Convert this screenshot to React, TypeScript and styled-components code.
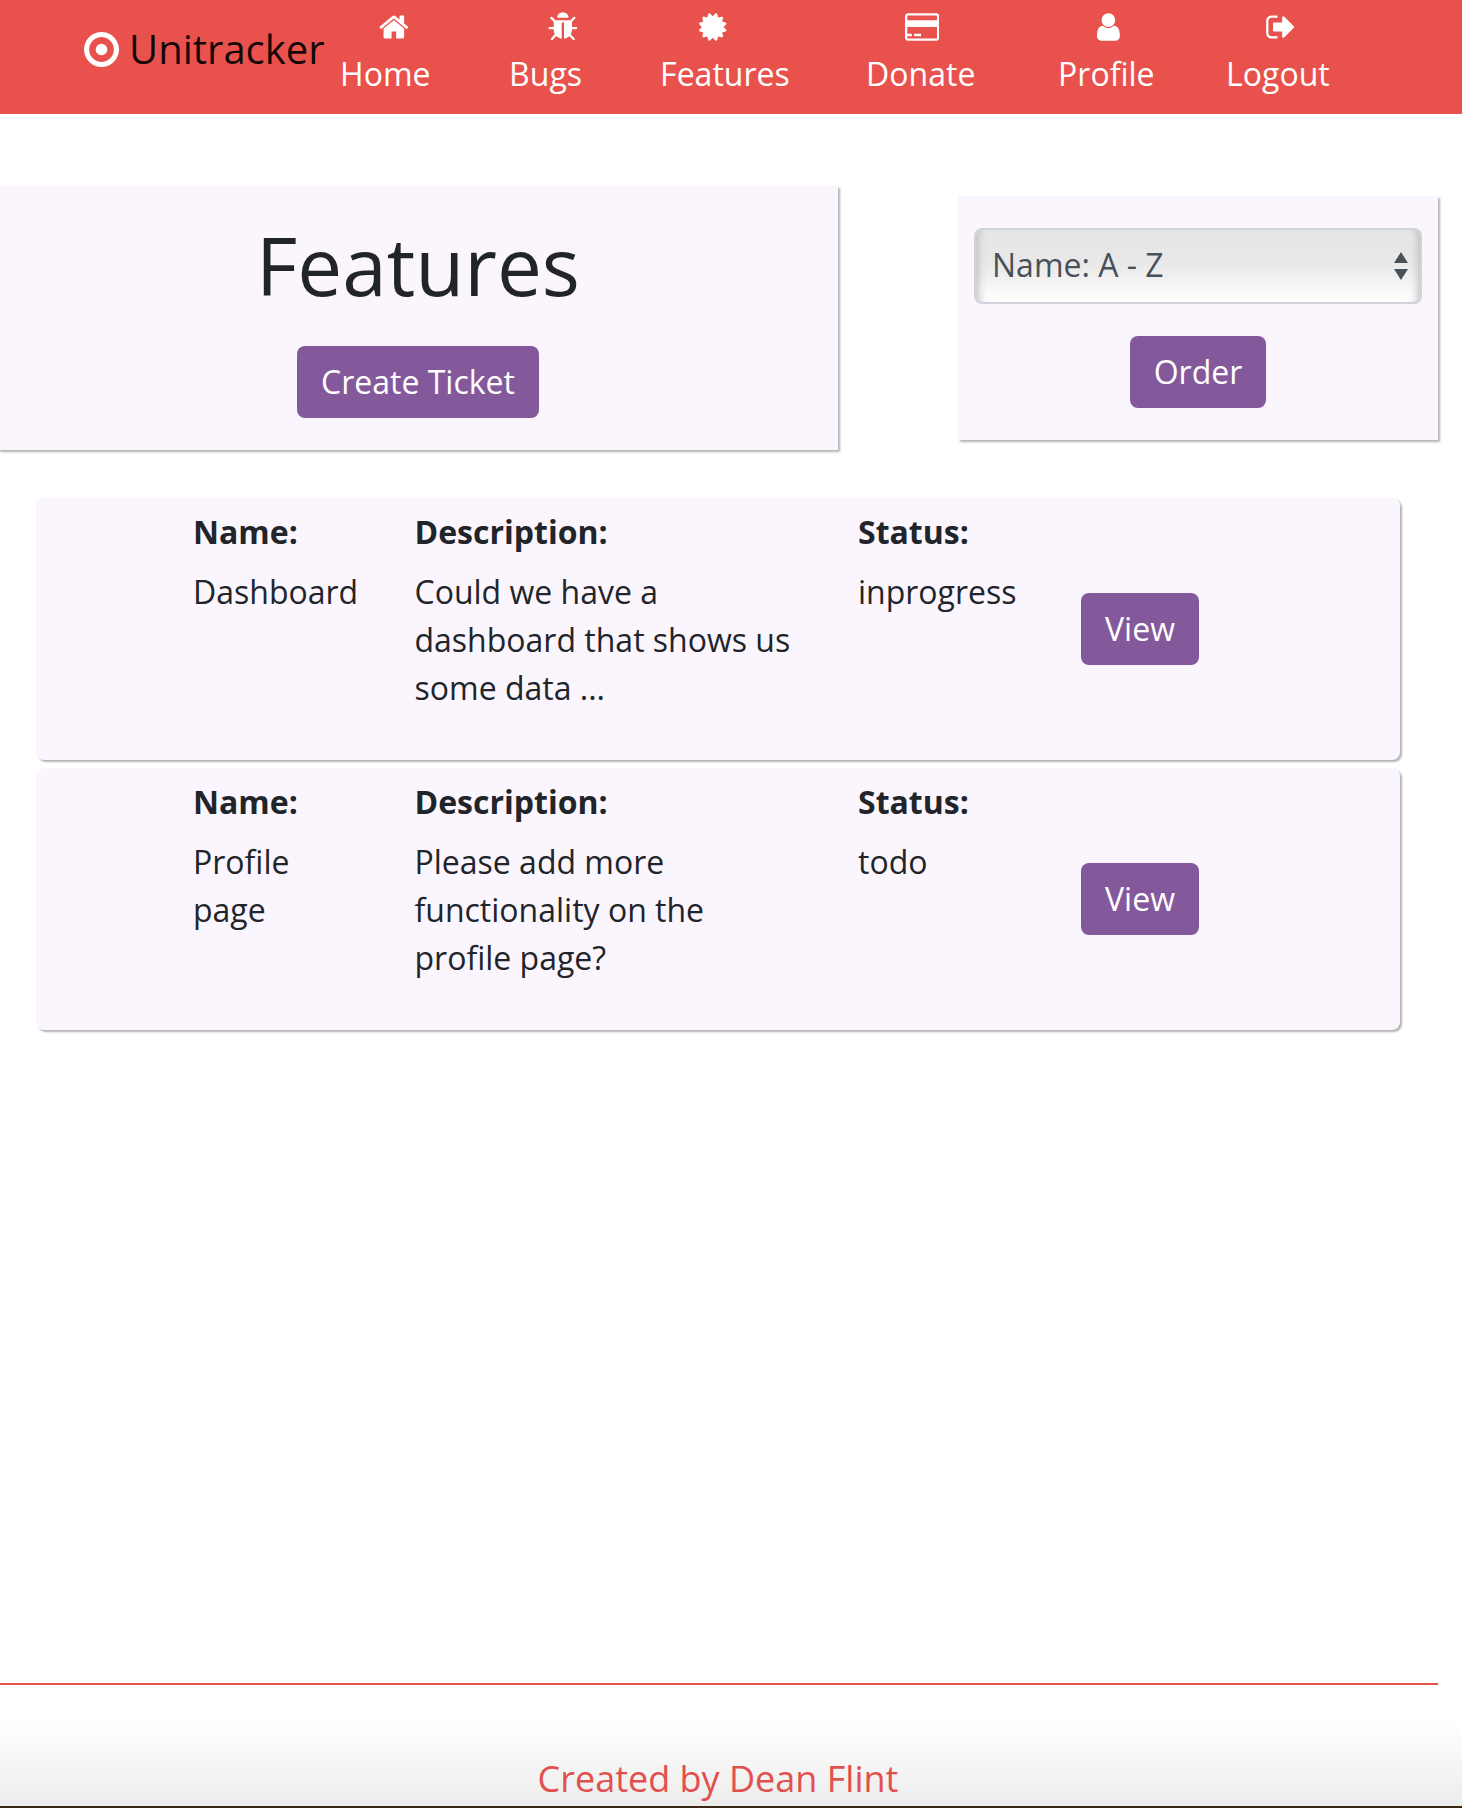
import * as React from 'react';
import styled, { createGlobalStyle } from 'styled-components';

const GlobalStyle = createGlobalStyle`
  html, body {
    margin: 0;
    padding: 0;
    background: #fff;
  }
  body {
    font-family: "Open Sans", "Liberation Sans", sans-serif;
    font-size: 32px;
    line-height: 48px;
    color: #212529;
  }
`;

const Page = styled.div`
  display: flex;
  flex-direction: column;
  height: 1808px;
  overflow: hidden;
`;

const Nav = styled.nav`
  display: flex;
  align-items: flex-start;
  height: 114px;
  flex-shrink: 0;
  background: #e9524c;
`;

const Brand = styled.a`
  display: flex;
  align-items: center;
  gap: 10px;
  margin: 19px 15.5px 0 84px;
  font-size: 40px;
  line-height: 60px;
  color: rgba(0, 0, 0, 0.92);
`;

const NavItem = styled.a<{ $width: number }>`
  display: block;
  width: ${(p) => p.$width}px;
  padding-top: 11px;
  color: #fff;
  svg {
    display: block;
    height: 32px;
    margin: 0 0 7px 39px;
    fill: #fff;
  }
`;

const Panels = styled.section`
  display: flex;
  align-items: flex-start;
  margin-top: 72px;
`;

const Panel = styled.div`
  background: #fbf6fe;
  box-shadow: 2px 2px 2px #b5b3b5;
  text-align: center;
`;

const TitlePanel = styled(Panel)`
  width: 840px;
  height: 264px;
  margin-left: -2px;
  padding-top: 31px;
  box-sizing: border-box;
`;

const SortPanel = styled(Panel)`
  width: 480px;
  height: 244px;
  margin: 10px 0 0 120px;
  padding: 32px 16px 0;
  box-sizing: border-box;
`;

const Title = styled.h1`
  margin: 0 0 33px;
  font-size: 80px;
  line-height: 96px;
  font-weight: 400;
`;

const Button = styled.a`
  display: inline-block;
  padding: 12px 24px;
  border-radius: 8px;
  background: #84599c;
  color: #fff;
`;

const SelectWrap = styled.div`
  position: relative;
  margin-bottom: 32px;
  svg {
    position: absolute;
    top: 24px;
    right: 14px;
    fill: #495057;
  }
`;

const Select = styled.select`
  display: block;
  width: 100%;
  height: 76px;
  padding: 0 16px 2px;
  border: 2px solid #ced4da;
  border-radius: 8px;
  appearance: none;
  background: linear-gradient(#e6e6e6 0%, #e8e8e8 45%, #fff 100%);
  box-shadow: inset 10px 0 8px -8px #bdbdbd, inset -10px 0 8px -8px #bdbdbd;
  font: inherit;
  color: #495057;
`;

const TicketList = styled.section`
  display: flex;
  flex-direction: column;
  gap: 8px;
  width: 1364px;
  margin: 48px 0 0 36px;
`;

const Ticket = styled.article`
  display: grid;
  grid-template-columns: 221.5px 443.5px 223px auto;
  height: 262px;
  padding: 10px 0 0 157px;
  box-sizing: border-box;
  border-radius: 8px;
  background: #fbf6fe;
  box-shadow: 2px 2px 2px #b5b3b5;
`;

const Field = styled.div`
  padding-right: 54px;
`;

const Label = styled.div`
  margin-bottom: 12px;
  font-weight: 700;
`;

const ViewCell = styled.div`
  padding-top: 85px;
`;

const Footer = styled.footer`
  margin-top: auto;
`;

const Rule = styled.hr`
  width: 1438px;
  height: 2px;
  margin: 0;
  border: 0;
  background: #e9524c;
`;

const Credit = styled.div`
  height: 121px;
  border-bottom: 2px solid #3a2714;
  background: linear-gradient(#fff 30%, #ececec 100%);
  font-size: 36px;
  line-height: 54px;
  color: #e2504d;
  text-align: center;
`;

const CreditText = styled.div`
  width: 1436px;
  padding-top: 67px;
`;

const icons = [
  { label: 'Home', width: 169, box: '64 0 1664 1792', d: 'M1472 992v480q0 26-19 45t-45 19h-384v-384h-256v384h-384q-26 0-45-19t-19-45v-480q0-1 .5-3t.5-3l575-474 575 474q1 2 1 6zm223-69l-62 74q-8 9-21 11h-3q-13 0-21-7l-692-577-692 577q-12 8-24 7-13-2-21-11l-62-74q-8-10-7-23.5t11-22.5l719-599q32-26 76-26t76 26l244 204v-195q0-14 9-23t23-9h192q14 0 23 9t9 23v408l219 182q10 8 11 21.5t-7 23.5z' },
  { label: 'Bugs', width: 151, box: '64 0 1664 1792', d: 'M1696 960q0 26-19 45t-45 19h-224q0 171-67 290l208 209q19 19 19 45t-19 45q-18 19-45 19t-45-19l-198-197q-5 5-15 13t-42 28.5-65 36.5-82 29-97 13v-896h-128v896q-51 0-101.5-13.5t-87-33-66-39-43.5-32.5l-15-14-183 207q-20 21-48 21-24 0-43-16-19-18-20.5-44.5t15.5-46.5l202-227q-58-114-58-274h-224q-26 0-45-19t-19-45 19-45 45-19h224v-294l-173-173q-19-19-19-45t19-45 45-19 45 19l173 173h844l173-173q19-19 45-19t45 19 19 45-19 45l-173 173v294h224q26 0 45 19t19 45zm-480-576h-640q0-133 93.5-226.5t226.5-93.5 226.5 93.5 93.5 226.5z' },
  { label: 'Features', width: 206, box: '128 0 1536 1792', d: 'M1504 896l138 135q30 28 20 70-12 41-52 51l-188 48 53 186q12 41-19 70-29 31-70 19l-186-53-48 188q-10 40-51 52-12 2-19 2-31 0-51-22l-135-138-135 138q-28 30-70 20-41-11-51-52l-48-188-186 53q-41 12-70-19-31-29-19-70l53-186-188-48q-40-10-52-51-10-42 20-70l138-135-138-135q-30-28-20-70 12-41 52-51l188-48-53-186q-12-41 19-70 29-31 70-19l186 53 48-188q10-41 51-51 41-12 70 19l135 139 135-139q29-30 70-19 41 10 51 51l48 188 186-53q41-12 70 19 31 29 19 70l-53 186 188 48q40 10 52 51 10 42-20 70z' },
  { label: 'Donate', width: 192, box: '0 0 1920 1792', d: 'M1760 128q66 0 113 47t47 113v1216q0 66-47 113t-113 47h-1600q-66 0-113-47t-47-113v-1216q0-66 47-113t113-47h1600zm-1600 128q-13 0-22.5 9.5t-9.5 22.5v224h1664v-224q0-13-9.5-22.5t-22.5-9.5h-1600zm1600 1280q13 0 22.5-9.5t9.5-22.5v-608h-1664v608q0 13 9.5 22.5t22.5 9.5h1600zm-1632-128v-128h256v128h-256zm384 0v-128h384v128h-384z' },
  { label: 'Profile', width: 168, box: '256 0 1280 1792', d: 'M1536 1399q0 109-62.5 187t-150.5 78h-854q-88 0-150.5-78t-62.5-187q0-85 8.5-160.5t31.5-152 58.5-131 94-89 134.5-34.5q131 128 313 128t313-128q76 0 134.5 34.5t94 89 58.5 131 31.5 152 8.5 160.5zm-256-887q0 159-112.5 271.5t-271.5 112.5-271.5-112.5-112.5-271.5 112.5-271.5 271.5-112.5 271.5 112.5 112.5 271.5z' },
  { label: 'Logout', width: 110, box: '0 0 1664 1792', d: 'M704 1440q0 4 1 20t.5 26.5-3 23.5-10 19.5-20.5 6.5h-320q-119 0-203.5-84.5t-84.5-203.5v-704q0-119 84.5-203.5t203.5-84.5h320q13 0 22.5 9.5t9.5 22.5q0 4 1 20t.5 26.5-3 23.5-10 19.5-20.5 6.5h-320q-66 0-113 47t-47 113v704q0 66 47 113t113 47h312l11.5 1 11.5 3 8 5.5 7 9 2 13.5zm928-544q0 26-19 45l-544 544q-19 19-45 19t-45-19-19-45v-288h-448q-26 0-45-19t-19-45v-384q0-26 19-45t45-19h448v-288q0-26 19-45t45-19 45 19l544 544q19 19 19 45z' }
];

const tickets = [
  { name: 'Dashboard', description: 'Could we have a dashboard that shows us some data ...', status: 'inprogress' },
  { name: 'Profile page', description: 'Please add more functionality on the profile page?', status: 'todo' }
];

export default function App() {
  return (
    <Page>
      <GlobalStyle />
      <Nav>
        <Brand>
          <svg width="35" height="35" viewBox="128 128 1536 1536" fill="#fff">
            <path d="M1152 896q0 106-75 181t-181 75-181-75-75-181 75-181 181-75 181 75 75 181zm-256-544q-148 0-273 73t-198 198-73 273 73 273 198 198 273 73 273-73 198-198 73-273-73-273-198-198-273-73zm768 544q0 209-103 385.5t-279.5 279.5-385.5 103-385.5-103-279.5-279.5-103-385.5 103-385.5 279.5-279.5 385.5-103 385.5 103 279.5 279.5 103 385.5z" />
          </svg>
          Unitracker
        </Brand>
        {icons.map((item) => (
          <NavItem key={item.label} $width={item.width}>
            <svg viewBox={item.box}>
              <path d={item.d} />
            </svg>
            {item.label}
          </NavItem>
        ))}
      </Nav>
      <Panels>
        <TitlePanel>
          <Title>Features</Title>
          <Button>Create Ticket</Button>
        </TitlePanel>
        <SortPanel>
          <SelectWrap>
            <Select defaultValue="az">
              <option value="az">Name: A - Z</option>
            </Select>
            <svg width="14" height="28" viewBox="0 0 14 28">
              <path d="M7 0l7 11H0zM0 17h14L7 28z" />
            </svg>
          </SelectWrap>
          <Button>Order</Button>
        </SortPanel>
      </Panels>
      <TicketList>
        {tickets.map((ticket) => (
          <Ticket key={ticket.name}>
            <Field>
              <Label>Name:</Label>
              {ticket.name}
            </Field>
            <Field>
              <Label>Description:</Label>
              {ticket.description}
            </Field>
            <Field>
              <Label>Status:</Label>
              {ticket.status}
            </Field>
            <ViewCell>
              <Button>View</Button>
            </ViewCell>
          </Ticket>
        ))}
      </TicketList>
      <Footer>
        <Rule />
        <Credit>
          <CreditText>Created by Dean Flint</CreditText>
        </Credit>
      </Footer>
    </Page>
  );
}
